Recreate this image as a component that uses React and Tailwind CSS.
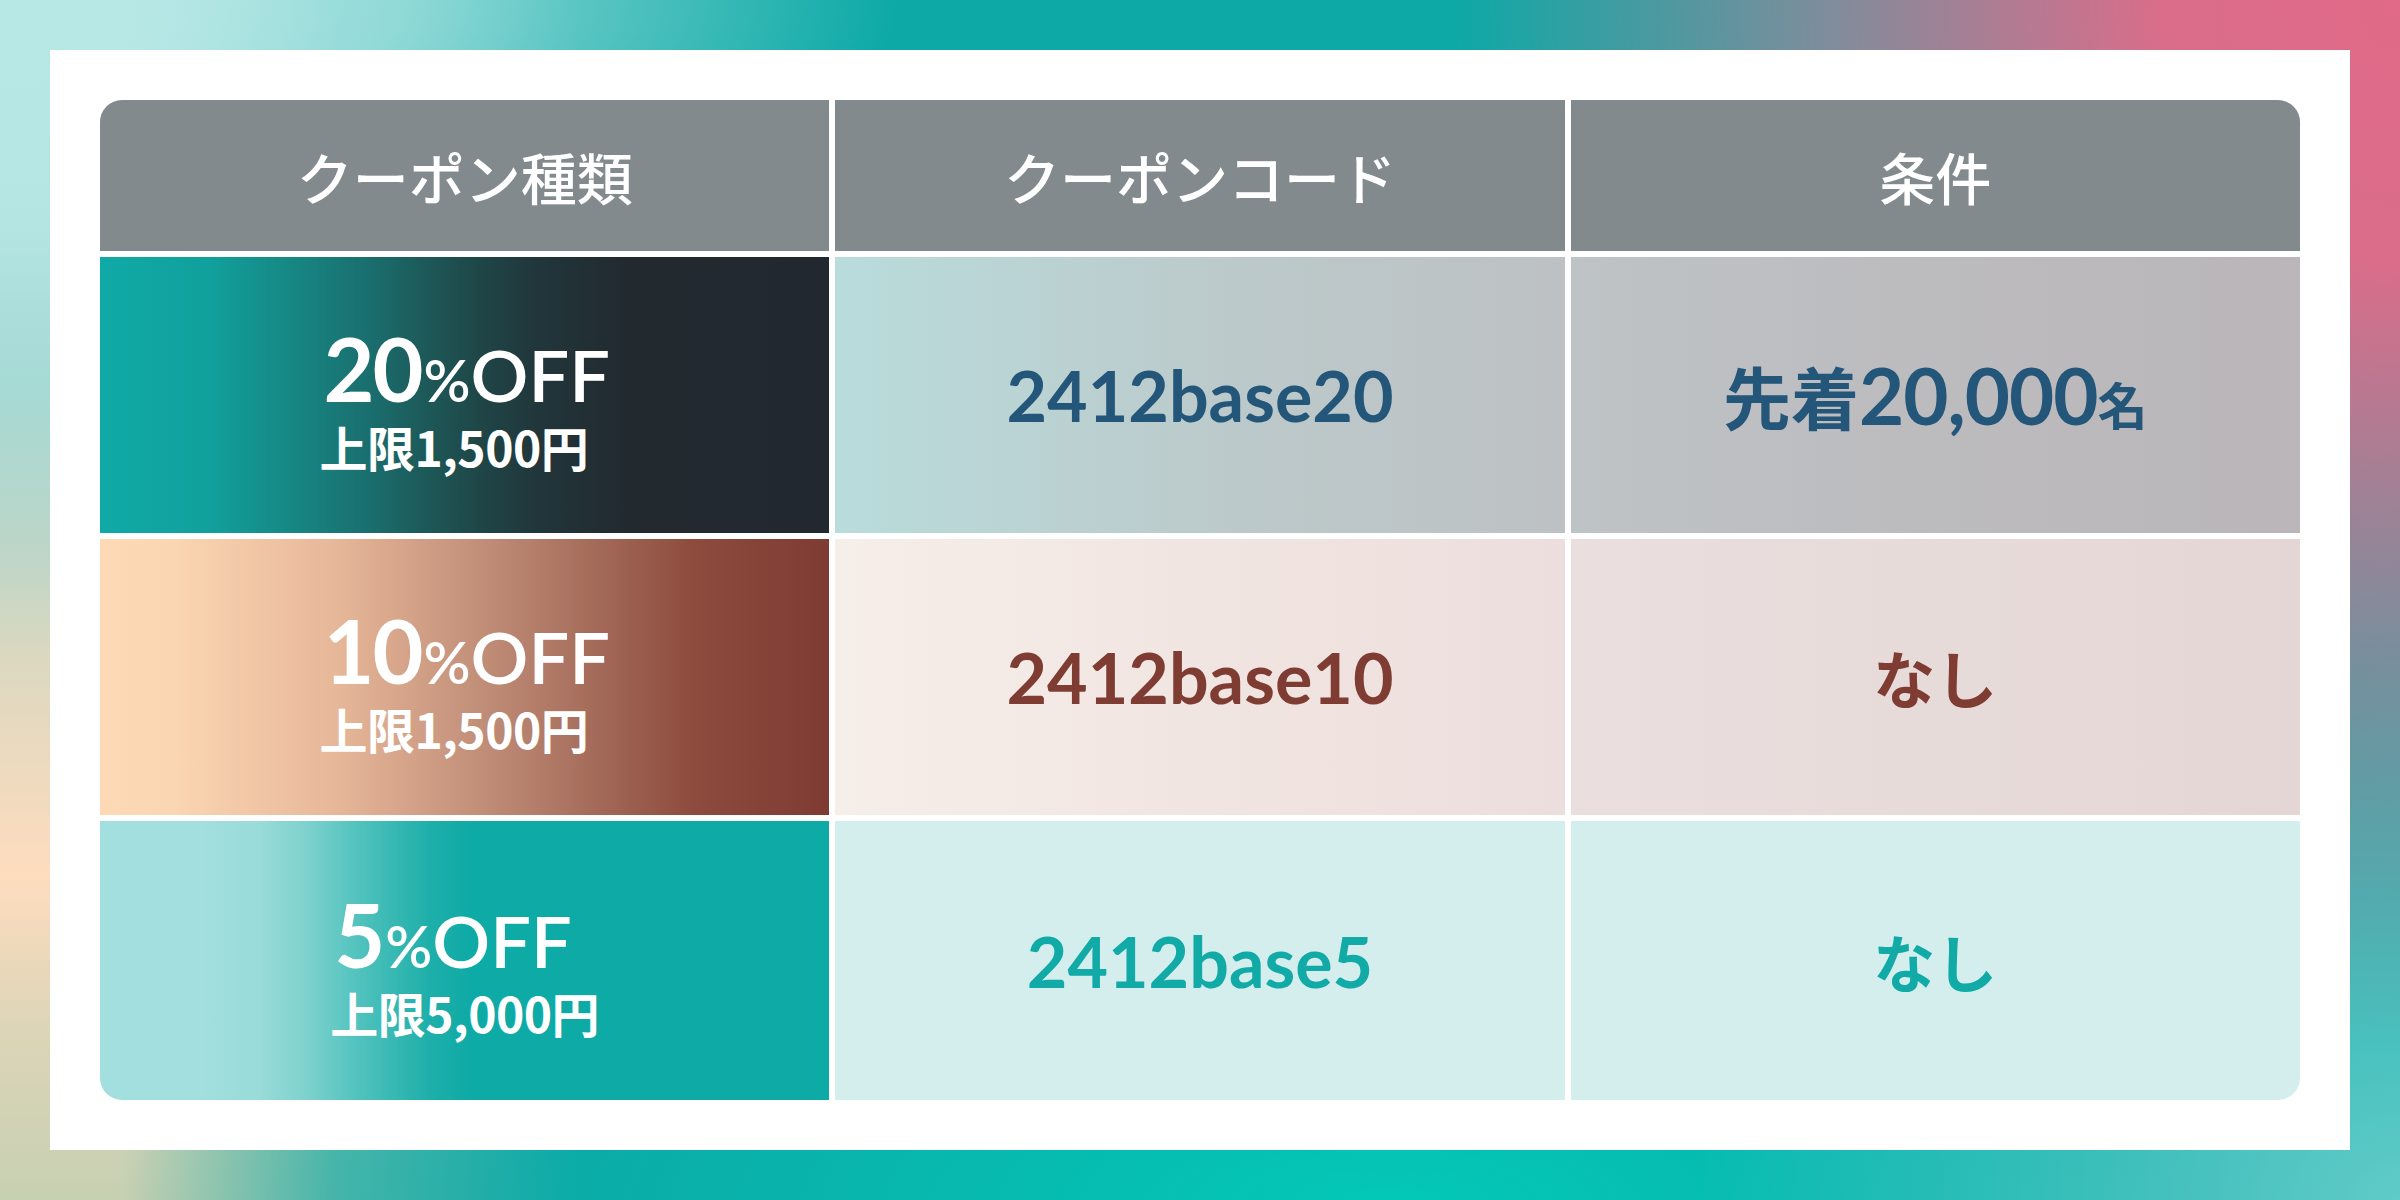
import React from "react";

const latin = "font-['Lato','Noto_Sans_CJK_JP',sans-serif]";
const cjk = "font-['Noto_Sans_CJK_JP',sans-serif]";

const rows = [
  {
    pct: "20",
    cap: "上限1,500円",
    code: "2412base20",
    typeBg:
      "bg-[linear-gradient(90deg,#10aaa6_0%,#11a09c_15%,#168a86_25%,#1a6e6e_37%,#1d5858_45%,#1f4647_52%,#21363b_60%,#222a30_72%,#22282f_100%)]",
    codeBg: "bg-[linear-gradient(90deg,#b9dcdc_0%,#bcc9ca_55%,#bdc1c4_100%)]",
    condBg: "bg-[linear-gradient(90deg,#bec3c6_0%,#bcbbbe_50%,#bab6b9_100%)]",
    text: "text-[#235679]",
  },
  {
    pct: "10",
    cap: "上限1,500円",
    code: "2412base10",
    typeBg:
      "bg-[linear-gradient(90deg,#fdd9b6_0%,#fbd6b3_10%,#e6b698_33%,#b88470_57%,#8d4c3e_81%,#7e3b33_100%)]",
    codeBg: "bg-[linear-gradient(90deg,#f6eee9_0%,#f1e5e2_50%,#ecdedc_100%)]",
    condBg: "bg-[linear-gradient(90deg,#eadfde_0%,#e7dbda_50%,#e4d6d5_100%)]",
    text: "text-[#7f3c33]",
  },
  {
    pct: "5",
    cap: "上限5,000円",
    code: "2412base5",
    typeBg:
      "bg-[linear-gradient(90deg,#a3dfdf_0%,#a2dfde_14%,#98dbd8_22%,#7fd2ce_28%,#4ec1bc_36%,#1fafaa_45%,#0eaaa6_51%,#0eaaa6_100%)]",
    codeBg: "bg-[#d3eeed]",
    condBg: "bg-[#d3eeed]",
    text: "text-[#12aaa6]",
  },
];

function Header({ children }) {
  return (
    <div
      className={`flex items-center justify-center bg-[#828a8d] text-white text-[56px] font-medium ${cjk}`}
    >
      {children}
    </div>
  );
}

export default function App() {
  return (
    <div className="w-[2400px] h-[1200px] p-[50px] bg-[radial-gradient(950px_1050px_at_100%_0%,#e06a88_0%,#da6d8a_25%,rgba(190,125,150,0.65)_60%,rgba(190,125,150,0)_100%),radial-gradient(700px_560px_at_100%_100%,#60cbc8_0%,rgba(96,203,200,0.5)_50%,rgba(96,203,200,0)_100%),radial-gradient(900px_260px_at_58%_100%,#03c8b8_0%,rgba(3,200,184,0)_100%),radial-gradient(900px_300px_at_0%_0%,#b8e8e6_0%,rgba(184,232,230,0.7)_45%,rgba(184,232,230,0)_100%),linear-gradient(90deg,rgba(12,169,166,0)_0%,rgba(12,169,166,0)_5%,rgba(12,169,166,0.7)_14%,#0ca9a6_24%,#0ca9a6_100%),linear-gradient(180deg,#b5e6e4_0%,#b3e4e2_18%,#a6dad5_32%,#bad6c8_45%,#dcd8c0_55%,#fedcbe_73%,#dcd5b8_86%,#c8d0b2_100%)]">
      <div className="w-full h-full bg-white p-[50px]">
        <div className="grid grid-cols-3 grid-rows-[151px_276px_276px_279px] gap-[6px] h-[1000px] rounded-[22px] overflow-hidden">
          <Header>クーポン種類</Header>
          <Header>クーポンコード</Header>
          <Header>条件</Header>

          {rows.map((r, i) => (
            <React.Fragment key={r.code}>
              <div className={`flex items-center justify-center ${r.typeBg}`}>
                <div className={`flex flex-col items-start text-white pt-[4px] ${latin}`}>
                  <div className="flex items-baseline font-bold leading-none pl-[4px]">
                    <span className="text-[88px] tracking-[-2px]">{r.pct}</span>
                    <span className="text-[58px] font-semibold ml-[2px]">%</span>
                    <span className="text-[72px] font-semibold">OFF</span>
                  </div>
                  <div className={`text-[48px] font-bold leading-none mt-[10px] tracking-[-0.5px] ${cjk}`}>
                    {r.cap}
                  </div>
                </div>
              </div>
              <div className={`flex items-center justify-center ${r.codeBg}`}>
                <span className={`text-[70px] font-bold leading-none ${latin} ${r.text}`}>
                  {r.code}
                </span>
              </div>
              <div className={`flex items-center justify-center ${r.condBg}`}>
                {i === 0 ? (
                  <span className={`flex items-baseline font-bold leading-none ${r.text}`}>
                    <span className={`text-[68px] ${cjk}`}>先着</span>
                    <span className={`text-[78px] tracking-[-1px] ${latin}`}>20,000</span>
                    <span className={`text-[50px] ${cjk}`}>名</span>
                  </span>
                ) : (
                  <span className={`text-[62px] font-bold leading-none ${cjk} ${r.text}`}>
                    なし
                  </span>
                )}
              </div>
            </React.Fragment>
          ))}
        </div>
      </div>
    </div>
  );
}
